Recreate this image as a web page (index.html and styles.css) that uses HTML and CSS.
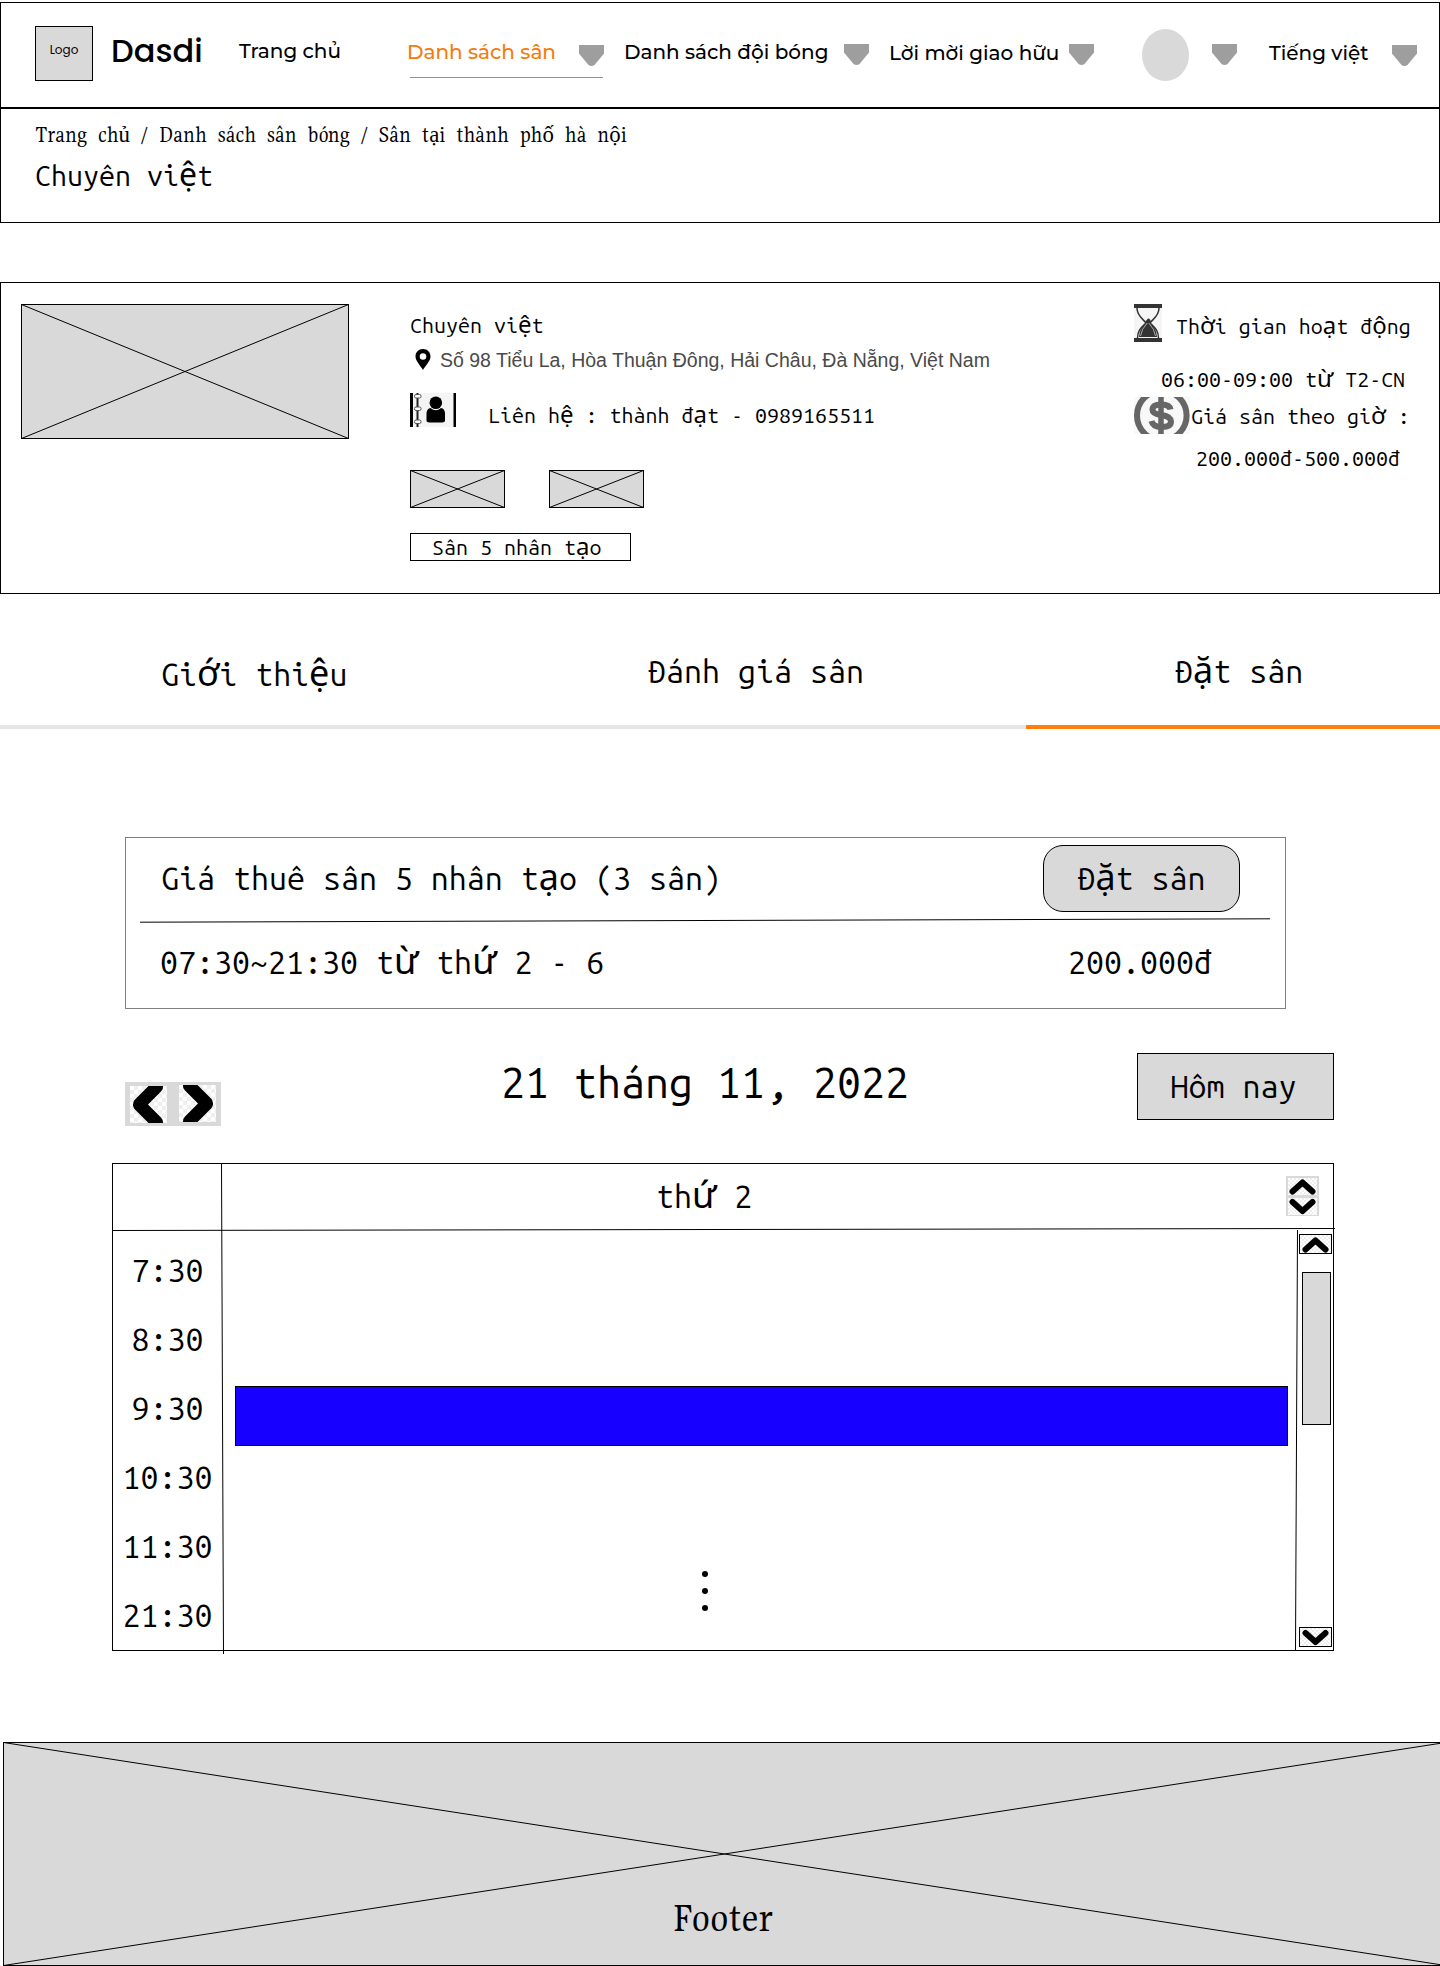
FILE: index.html
```html
<!DOCTYPE html>
<html lang="vi">
<head>
<meta charset="utf-8">
<title>Dasdi - Đặt sân</title>
<link rel="stylesheet" href="styles.css">
</head>
<body>
<svg width="0" height="0" class="defs">
  <symbol id="caret" viewBox="0 0 25 21"><path d="M0 0H25V8.500L15.500 20Q12.500 22 9.500 20L0 8.500Z" fill="#9e9e9e"/></symbol>
  <symbol id="chev-up" viewBox="0 0 29 17"><path d="M4.500 13.500 14.500 4.500 24.500 13.500" fill="none" stroke="#000" stroke-width="6" stroke-linecap="round" stroke-linejoin="round"/></symbol>
  <symbol id="chev-down" viewBox="0 0 29 17"><path d="M4.500 4 14.500 13 24.500 4" fill="none" stroke="#000" stroke-width="6" stroke-linecap="round" stroke-linejoin="round"/></symbol>
</svg>

<header class="topbar">
  <div class="logo">Logo</div>
  <div class="brand">Dasdi</div>
  <nav class="nav">
    <a class="nav-home">Trang chủ</a>
    <a class="nav-item nav-active">Danh sách sân <svg class="caret"><use href="#caret"/></svg></a>
    <a class="nav-item nav-teams">Danh sách đội bóng <svg class="caret"><use href="#caret"/></svg></a>
    <a class="nav-item nav-invite">Lời mời giao hữu <svg class="caret"><use href="#caret"/></svg></a>
    <a class="nav-item nav-user"><span class="avatar"></span><svg class="caret"><use href="#caret"/></svg></a>
    <a class="nav-item nav-lang">Tiếng việt <svg class="caret"><use href="#caret"/></svg></a>
  </nav>
</header>

<section class="heading">
  <div class="crumbs">Trang chủ / Danh sách sân bóng / Sân tại thành phố hà nội</div>
  <h1>Chuyên vi<b>ệ</b>t</h1>
</section>

<section class="venue">
  <svg class="photo" viewBox="0 0 328 135"><rect x=".5" y=".5" width="327" height="134"/><path d="M.5.5 327.500 134.500M327.500.5.5 134.500"/></svg>
  <div class="info">
    <h2>Chuyên vi<b>ệ</b>t</h2>
    <div class="address">
      <svg class="pin" viewBox="0 0 16 21"><path fill-rule="evenodd" d="M8 0C3.500 0 .5 3.300.5 7.500.5 12 5.500 16.500 8 21 10.500 16.500 15.500 12 15.500 7.500 15.500 3.300 12.500 0 8 0ZM8 4.200A3.300 3.300 0 1 1 8 10.800 3.300 3.300 0 0 1 8 4.200Z"/></svg>
      <span>Số 98 Tiểu La, Hòa Thuận Đông, Hải Châu, Đà Nẵng, Việt Nam</span>
    </div>
    <div class="contact">
      <svg class="book" viewBox="0 0 46 34"><rect width="46" height="34" fill="#f4f4f4"/><rect width="3" height="34"/><rect x="43.500" width="2.500" height="34"/><path d="M7.500 0V34" stroke="#222" stroke-width="2"/><g fill="#fff" stroke="#555"><rect x="4.500" y="1.500" width="6.500" height="3.500" rx="1.500"/><rect x="4.500" y="14" width="6.500" height="3.500" rx="1.500"/><rect x="4.500" y="27" width="6.500" height="3.500" rx="1.500"/></g><circle cx="25.800" cy="9.700" r="6.300"/><path d="M16.500 28V20Q17 15.500 20.500 15Q25.800 19.500 31 15Q34.500 15.500 35 20V28Q34.500 29.500 30 29.500H21.500Q17 29.500 16.500 28Z"/></svg>
      <span>Liên h<b>ệ</b> : thành đ<b>ạ</b>t - 0989165511</span>
    </div>
    <div class="thumbs">
      <svg class="thumb" viewBox="0 0 95 38"><rect x=".5" y=".5" width="94" height="37"/><path d="M.5.5 94.500 37.500M94.500.5.5 37.500"/></svg>
      <svg class="thumb" viewBox="0 0 95 38"><rect x=".5" y=".5" width="94" height="37"/><path d="M.5.5 94.500 37.500M94.500.5.5 37.500"/></svg>
    </div>
    <div class="tag">Sân 5 nhân t<b>ạ</b>o</div>
  </div>
  <div class="facts">
    <div class="fact-hours">
      <svg class="hourglass" viewBox="0 0 28 38"><rect width="28" height="38" fill="#f5f5f5"/><rect width="28" height="4" fill="#333"/><rect y="34" width="28" height="4" fill="#333"/><path d="M3 4C3 12 9 15 12 19 8 23 3.500 26 3.500 34M25 4C25 12 19 15 16 19 20 23 24.500 26 24.500 34" fill="none" stroke="#333" stroke-width="1.500"/><path d="M14 14.500Q17 14.500 17 19.500 22.500 25 23 33H5Q5.500 25 11 19.500 11 17 14 14.500Z" fill="#333"/><path d="M13.200 19Q7.500 25 6.500 32M14.800 19Q20.500 25 21.500 32" fill="none" stroke="#ccc" stroke-width=".8"/></svg>
      <span>Th<b>ờ</b>i gian ho<b>ạ</b>t đ<b>ộ</b>ng</span>
    </div>
    <div class="fact-time">06:00-09:00 t<b>ừ</b> T2-CN</div>
    <div class="fact-price">
      <svg class="coin" viewBox="0 0 56 37"><rect width="56" height="37" fill="#f8f8f8"/><circle cx="27.800" cy="18.500" r="24.800" fill="none" stroke="#666" stroke-width="6"/><path d="M27 0V37" stroke="#666" stroke-width="5.500"/><path d="M36.500 12.500Q35.500 7.500 27.500 7.500 18.500 7.500 18.500 12.800 18.500 17 27.500 18 37 19.500 37 24.500 37 30 27.500 30 19 30 17.500 24" fill="none" stroke="#666" stroke-width="6"/></svg>
      <span>Giá sân theo gi<b>ờ</b> :</span>
    </div>
    <div class="fact-range">200.000đ-500.000đ</div>
  </div>
</section>

<nav class="tabs">
  <a class="tab tab-intro">Gi<b>ớ</b>i thi<b>ệ</b>u</a>
  <a class="tab tab-review">Đánh giá sân</a>
  <a class="tab tab-book">Đ<b>ặ</b>t sân</a>
</nav>

<section class="pricing">
  <div class="price-head"><span>Giá thuê sân 5 nhân t<b>ạ</b>o (3 sân)</span><button class="book-btn">Đ<b>ặ</b>t sân</button></div>
  <svg class="divider" viewBox="0 0 1130 5"><path d="M0 4.200 1130 .8"/></svg>
  <div class="price-row"><span>07:30~21:30 t<b>ừ</b> th<b>ứ</b> 2 - 6</span><span class="amount">200.000đ</span></div>
</section>

<section class="toolbar">
  <div class="pager">
    <svg class="page-btn prev" viewBox="0 0 37 37"><path d="M18.500 0H33Q33.500 3 31 5.500L18 18.500 31 31.500Q33.500 34 33 37H18.500L4.500 23Q1.500 18.500 4.500 14Z"/></svg>
    <svg class="page-btn next" viewBox="0 0 37 37"><path d="M18.500 0H4Q3.500 3 6 5.500L19 18.500 6 31.500Q3.500 34 4 37H18.500L32.500 23Q35.500 18.500 32.500 14Z"/></svg>
  </div>
  <div class="date">21 tháng 11, 2022</div>
  <button class="today">Hôm nay</button>
</section>

<section class="schedule">
  <div class="sched-head">
    <span class="day">th<b>ứ</b> 2</span>
    <div class="sort"><svg class="tile"><use href="#chev-up"/></svg><svg class="tile"><use href="#chev-down"/></svg></div>
  </div>
  <div class="sched-body">
    <div class="times"><span>7:30</span><span>8:30</span><span>9:30</span><span>10:30</span><span>11:30</span><span>21:30</span></div>
    <div class="slots">
      <div class="booked"></div>
      <div class="more"><i></i><i></i><i></i></div>
    </div>
    <div class="scroll">
      <svg class="scroll-btn" viewBox="-1 -1 31 18"><use href="#chev-up" width="29" height="17"/></svg>
      <div class="scroll-thumb"></div>
      <svg class="scroll-btn" viewBox="-1 -1 31 18"><use href="#chev-down" width="29" height="17"/></svg>
    </div>
  </div>
  <svg class="rules" viewBox="0 0 1224 492"><path d="M0 67.500 1223 65.500M109.500 0 111.500 491M1185.500 67 1183.500 487"/></svg>
</section>

<footer class="footer">
  <svg class="footer-cross" viewBox="0 0 1437 224"><rect x=".5" y=".5" width="1442" height="223"/><path d="M.5.5 1442.500 223.500M1442.500.5.5 223.500"/></svg>
  <span>Footer</span>
</footer>
</body>
</html>
```
FILE: styles.css
```css
* { box-sizing: border-box; }
body { margin: 0; padding-top: 2px; background: #fff; color: #000; font-family: "Ubuntu Mono", "DejaVu Sans Mono", monospace; font-size: 32.140px; line-height: 40px; white-space: nowrap; overflow-x: hidden; }
svg { display: block; flex: none; }
.defs { position: absolute; }
h1, h2 { margin: 0; font-weight: 400; }
b { font-family: "Noto Sans", sans-serif; font-weight: 400; font-size: 1.120em; line-height: 0; }
button { font: inherit; color: inherit; padding: 0; background: #d9d9d9; border: 1px solid #000; }

.topbar { display: flex; align-items: flex-start; height: 107px; border: 1px solid #000; border-bottom-width: 2px; padding-left: 34px; }
.logo { width: 58px; height: 55px; margin-top: 23px; background: #d9d9d9; border: 1px solid #000; font: 400 12px/45px Poppins, Inter, sans-serif; text-align: center; }
.brand { width: 127px; margin: 28px 0 0 18px; font: 500 32px/40px Poppins, Inter, sans-serif; }
.nav { display: flex; align-items: flex-start; font: 500 20px/24px Montserrat, Inter, sans-serif; }
.nav-home { margin: 36px 0 0 1px; width: 167px; }
.nav-item { display: flex; justify-content: space-between; margin-top: 37px; }
.nav-active { position: relative; width: 197px; margin-left: 1px; color: #f57c0a; }
.nav-active::after { content: ""; position: absolute; left: 3px; right: 1px; top: 37px; height: 1px; background: #f57c0a; }
.nav-teams { width: 245px; margin-left: 20px; }
.nav-invite { width: 205px; margin: 38px 0 0 20px; }
.nav-user { width: 95px; margin: 26px 0 0 48px; }
.nav-lang { width: 148px; margin: 38px 0 0 32px; }
.caret { width: 25px; height: 21px; margin-top: 4px; }
.nav-invite .caret { margin-top: 3px; }
.nav-active .caret { margin-top: 5px; }
.nav-user .caret { margin-top: 15px; }
.nav-lang .caret { margin-top: 4px; }
.avatar { width: 47px; height: 52px; border-radius: 50%; background: #d9d9d9; }

.heading { height: 114px; border: 1px solid #000; border-top: 0; padding: 14px 0 0 34px; }
.crumbs { font: 22.800px/24px Gupter, "Liberation Serif", serif; word-spacing: 5.800px; }
.heading h1 { margin-top: 10px; font-size: 28.570px; line-height: 36px; }

.venue { display: flex; align-items: flex-start; height: 312px; margin-top: 59px; border: 1px solid #000; font-size: 21.430px; line-height: 24px; }
.photo { width: 328px; height: 135px; margin: 21px 0 0 20px; }
.photo, .thumb, .footer-cross { fill: #d9d9d9; stroke: #000; }
.info { width: 724px; margin: 30px 0 0 61px; }
.info h2 { font-size: 21.430px; }
.address { display: flex; gap: 9px; margin: 11px 0 0 5px; font: 19.500px/24px "Liberation Sans", Arial, sans-serif; color: #4a4a4a; }
.pin { width: 16px; height: 21px; margin-top: 1px; fill: #000; }
.contact { display: flex; gap: 32px; height: 34px; margin-top: 21px; }
.contact span { margin-top: 10px; }
.book { width: 46px; height: 34px; }
.thumbs { display: flex; gap: 44px; margin-top: 43px; }
.thumb { width: 95px; height: 38px; }
.tag { width: 221px; height: 28px; margin-top: 25px; padding: 1px 0 0 21px; border: 1px solid #000; }
.facts { margin-top: 21px; }
.fact-hours { display: flex; gap: 14px; height: 38px; }
.hourglass { width: 28px; height: 38px; }
.fact-hours span { margin-top: 10px; }
.fact-time { margin: 25px 0 6px 27px; }
.fact-price { display: flex; height: 37px; }
.coin { width: 56px; height: 37px; }
.fact-price span { margin: 7px 0 0 1px; }
.fact-range { margin: 12px 0 0 62px; }

.tabs { display: grid; grid-template-columns: 513px 513px 414px; height: 135px; }
.tab { padding-top: 57px; border-bottom: 4px solid #e6e6e6; }
.tab-intro { padding: 60px 0 0 161px; }
.tab-review { padding-left: 135px; }
.tab-book { padding-left: 149px; border-color: #ff7f0a; }

.pricing { width: 1161px; height: 172px; margin: 108px 0 0 125px; border: 1px solid #808080; padding: 7px 45px 0 14px; }
.price-head { display: flex; justify-content: space-between; height: 67px; padding-left: 21px; }
.price-head span { padding-top: 13px; }
.book-btn { width: 197px; height: 67px; padding-bottom: 2px; border-radius: 20px; }
.divider { width: 1130px; height: 5px; margin-top: 6px; stroke: #000; }
.price-row { display: flex; justify-content: space-between; margin: 19px 28px 0 20px; }

.toolbar { display: flex; align-items: flex-start; margin: 44px 0 0 125px; height: 73px; }
.pager { display: flex; gap: 12px; width: 96px; height: 44px; margin-top: 29px; padding: 3px 5px 0; background: #d9d9d9; }
.page-btn { width: 37px; height: 37px; }
.prev { margin-top: 1px; }
.page-btn, .tile, .scroll-btn { background: repeating-conic-gradient(#efefef 0 25%, #fff 0 50%) 0 0 / 8px 8px; }
.date { width: 636px; margin: 3px 0 0 280px; font-size: 42.860px; line-height: 52px; }
.today { width: 197px; height: 67px; padding: 0 4px 1px 0; }

.schedule { position: relative; width: 1222px; height: 488px; margin: 37px 0 0 112px; border: 1px solid #000; }
.sched-head { display: flex; height: 66px; padding: 12px 14px 0 543px; justify-content: space-between; }
.sort { width: 33px; height: 40px; padding: 2px; display: flex; flex-direction: column; gap: 3px; background: #d9d9d9; }
.tile { width: 29px; height: 17px; background-size: 4px 4px; }
.sched-body { display: flex; height: 420px; }
.times { display: flex; flex-direction: column; width: 109px; padding-top: 6px; text-align: center; line-height: 69px; }
.slots { width: 1077px; padding: 156px 0 0 13px; }
.booked { width: 1053px; height: 60px; background: #1700ff; border: 1px solid #000; }
.more { display: flex; flex-direction: column; gap: 11px; margin: 125px 0 0 467px; }
.more i { width: 6px; height: 6px; border-radius: 50%; background: #000; }
.scroll { display: flex; flex-direction: column; padding-top: 4px; }
.scroll-btn { width: 33px; height: 20px; border: 1px solid #000; background-size: 4px 4px; }
.scroll-thumb { width: 29px; height: 153px; margin: 18px 0 202px 3px; background: #d9d9d9; border: 1px solid #000; }
.rules { position: absolute; left: -1px; top: -1px; width: 1224px; height: 492px; stroke: #000; }

.footer { display: grid; margin: 91px 0 0 3px; height: 224px; }
.footer > * { grid-area: 1 / 1; }
.footer-cross { width: 1437px; height: 224px; }
.footer span { padding: 156px 0 0 669px; font: 42px/40px Gupter, "Liberation Serif", serif; }
```
